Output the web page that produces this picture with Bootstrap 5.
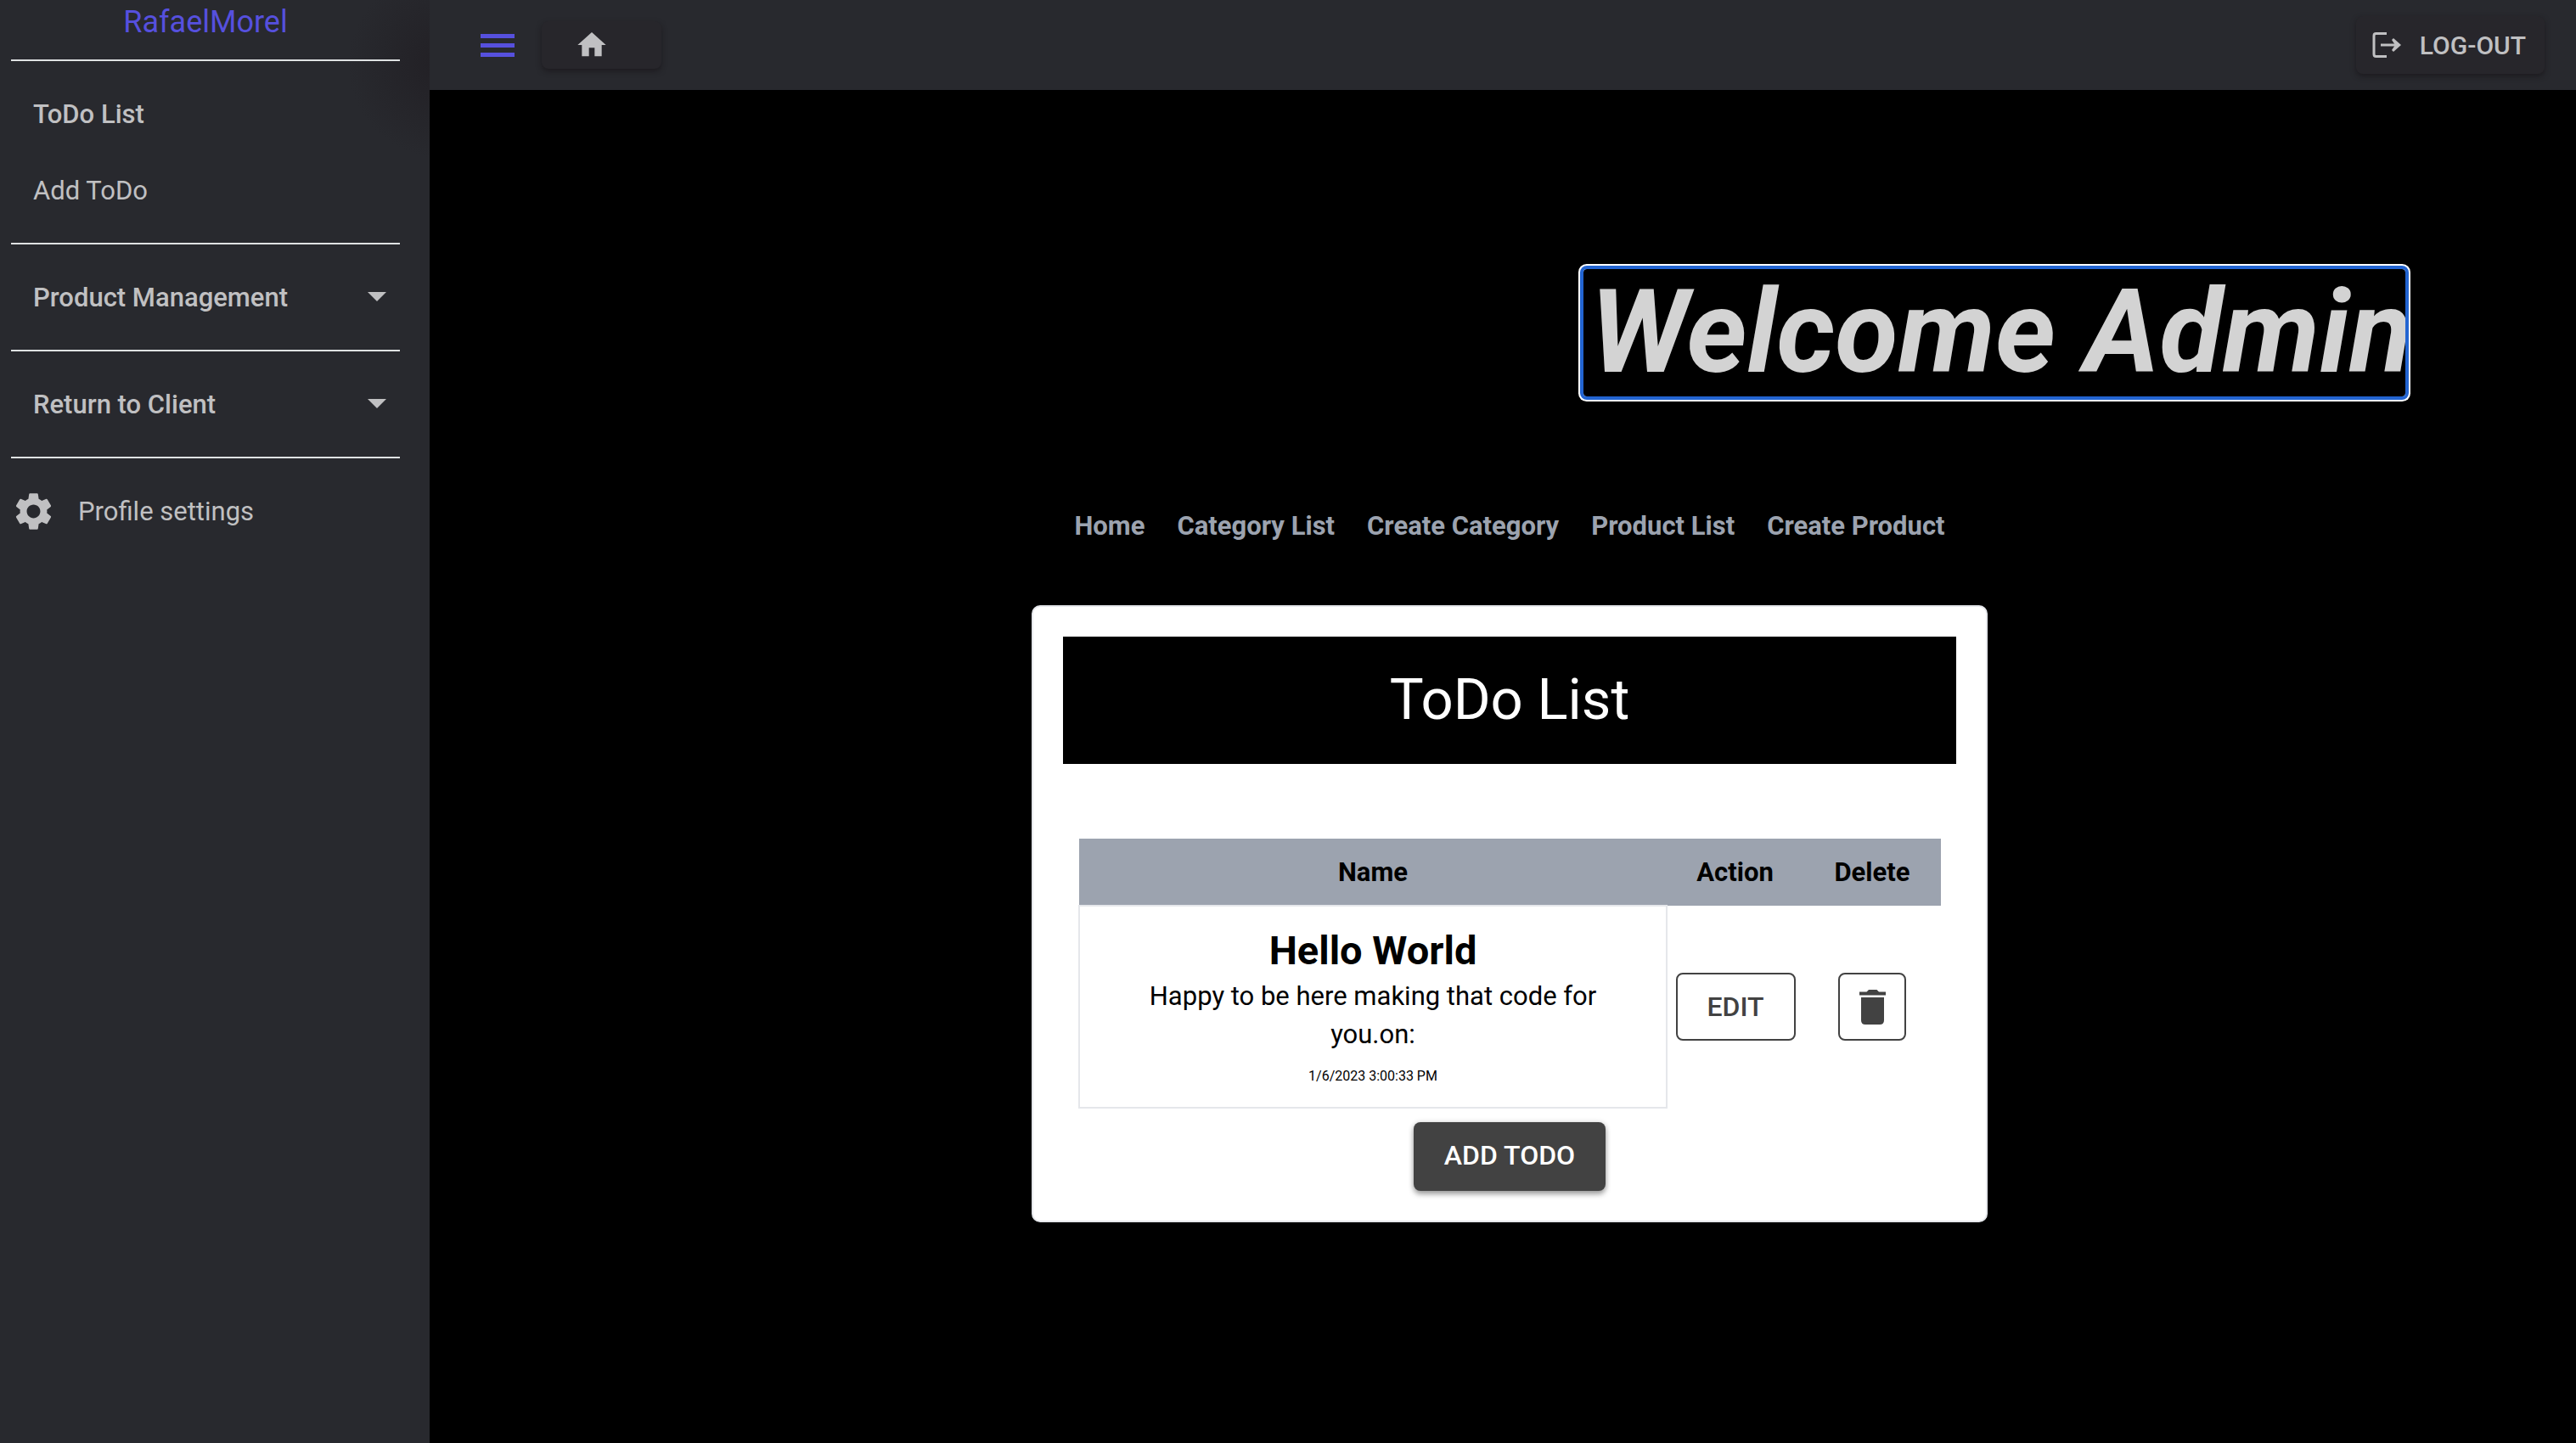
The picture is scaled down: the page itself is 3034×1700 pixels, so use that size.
<!DOCTYPE html>
<html lang="en">
<head>
<meta charset="utf-8">
<meta name="viewport" content="width=device-width, initial-scale=1">
<title>Admin - ToDo List</title>
<link href="https://cdn.jsdelivr.net/npm/bootstrap@5.3.0/dist/css/bootstrap.min.css" rel="stylesheet">
<style>
  body { background: #000; color: #000; font: 400 31px/45px Roboto, "Liberation Sans", sans-serif; }
  a { color: inherit; text-decoration: none; }
  svg { display: block; fill: currentColor; flex: none; }
  .side { flex: 0 0 506px; background: #28292e radial-gradient(circle at 520px 76px, #222025 0, #28292e 110px); color: #c0c0c2; padding: 0 35px 0 13px; }
  .side-brand { height: 70px; padding-top: 2px; font-size: 36px; line-height: 48px; color: #5650de; }
  .side-group { border-top: 2px solid #dfe2e3; padding: 17px 0; }
  .side-item { display: flex; align-items: center; width: 100%; height: 90px; padding: 0 11px 0 26px; background: none; border: 0; color: inherit; text-align: left; }
  .side-item.strong { font-weight: 500; }
  .side-item.with-icon { padding-left: 0; gap: 26px; }
  .top { height: 106px; background: #28292e; color: #c0c0c2; padding: 0 37px 0 59px; }
  .top-btn { background: #27262b; color: inherit; border: 0; border-radius: 8px; box-shadow: 0 3px 6px rgba(20, 16, 20, .55); }
  .home-btn { width: 141px; height: 56px; margin-left: 31px; padding: 0 0 0 39px; }
  .logout-btn { height: 68px; padding: 0 22px 0 19px; font-size: 30px; font-weight: 500; gap: 22px; }
  .logout-btn svg { fill: none; stroke: currentColor; stroke-width: 3; }
  .menu-btn { background: none; border: 0; padding: 0; color: #5650de; }
  .content { padding: 211px 0 0 16px; }
  .welcome { width: 968px; height: 150px; margin: 0 8% 0 auto; padding-left: 8px; font-size: 136px; line-height: 150px; font-weight: 700; font-style: italic; color: #d3d3d3; white-space: nowrap; outline: 4px solid #2264d1; box-shadow: 0 0 0 6px #fff; border-radius: 4px; }
  .links { margin-top: 130px; gap: 38px; font-weight: 700; color: #9ca3af; }
  .panel { width: 1126px; margin: 71px auto 0; padding: 35px; background: #fff; border: 2px solid #e5e7eb; border-radius: 10px; }
  .panel-title { height: 150px; line-height: 148px; font-size: 67px; font-weight: 400; background: #000; color: #fff; margin: 0 0 88px; }
  .todo-table { width: 1015px; margin: 0 auto; border-collapse: collapse; table-layout: fixed; text-align: center; }
  .todo-table th { height: 79px; background: #9ca3af; padding: 0; font-weight: 700; }
  .todo-table td { height: 238px; padding: 0; vertical-align: middle; }
  .todo-table td.entry { border: 2px solid #e5e7eb; padding: 21px 64px 8px; vertical-align: top; }
  .col-name { width: 692px; }
  .col-action { width: 161px; }
  .col-delete { width: 162px; }
  .entry-title { font-size: 47px; line-height: 62px; font-weight: 700; margin: 0; }
  .entry-date { font-size: 16px; line-height: 54px; }
  .line-btn { display: block; height: 80px; margin: 0 auto; border: 2px solid #424242; border-radius: 8px; color: #424242; background: none; font-size: 32px; font-weight: 500; padding: 0; }
  .edit-btn { width: 141px; }
  .trash-btn { width: 80px; }
  .add-btn { display: block; height: 81px; width: 226px; margin: 16px auto 0; padding: 0 0 2px; border: 0; border-radius: 8px; background: #424242; color: #fff; font-size: 32px; font-weight: 500; box-shadow: 0 4px 6px rgba(0, 0, 0, .35), 0 0 6px rgba(0, 0, 0, .15); }
</style>
<script src="https://cdn.jsdelivr.net/npm/bootstrap@5.3.0/dist/js/bootstrap.bundle.min.js"></script>
</head>
<body>
<div class="d-flex min-vh-100">
  <aside class="side">
    <div class="side-brand text-center">RafaelMorel</div>
    <nav>
      <div class="side-group">
        <a class="side-item strong" href="#">ToDo List</a>
        <a class="side-item" href="#">Add ToDo</a>
      </div>
      <div class="side-group">
        <button class="side-item strong justify-content-between" type="button">Product Management
          <svg width="32" height="12" viewBox="0 0 32 12"><path d="M5 0h22L16 11z"/></svg></button>
      </div>
      <div class="side-group">
        <button class="side-item strong justify-content-between" type="button">Return to Client
          <svg width="32" height="12" viewBox="0 0 32 12"><path d="M5 0h22L16 11z"/></svg></button>
      </div>
      <div class="side-group">
        <a class="side-item with-icon" href="#">
          <svg width="53" height="53" viewBox="0 0 24 24"><path d="M19.14 12.94c.04-.3.06-.61.06-.94 0-.32-.02-.64-.07-.94l2.03-1.58c.18-.14.23-.41.12-.61l-1.92-3.32c-.12-.22-.37-.29-.59-.22l-2.39.96c-.5-.38-1.03-.7-1.62-.94l-.36-2.54c-.04-.24-.24-.41-.48-.41h-3.84c-.24 0-.43.17-.47.41l-.36 2.54c-.59.24-1.13.57-1.62.94l-2.39-.96c-.22-.08-.47 0-.59.22L2.74 8.87c-.12.21-.08.47.12.61l2.03 1.58c-.05.3-.09.63-.09.94s.02.64.07.94l-2.03 1.58c-.18.14-.23.41-.12.61l1.92 3.32c.12.22.37.29.59.22l2.39-.96c.5.38 1.03.7 1.62.94l.36 2.54c.05.24.24.41.48.41h3.84c.24 0 .44-.17.47-.41l.36-2.54c.59-.24 1.13-.56 1.62-.94l2.39.96c.22.08.47 0 .59-.22l1.92-3.32c.12-.22.07-.47-.12-.61l-2.01-1.58zM12 15.6c-1.98 0-3.6-1.62-3.6-3.6s1.62-3.6 3.6-3.6 3.6 1.62 3.6 3.6-1.62 3.6-3.6 3.6z"/></svg>
          Profile settings</a>
      </div>
    </nav>
  </aside>
  <div class="flex-grow-1">
    <header class="top d-flex align-items-center">
      <button class="menu-btn" type="button" aria-label="Menu"><svg width="42" height="27" viewBox="0 0 42 27"><path d="M1 0h40v5H1zM1 11h40v5H1zM1 22h40v5H1z"/></svg></button>
      <button class="top-btn home-btn d-flex align-items-center" type="button" aria-label="Home"><svg width="40" height="40" viewBox="0 0 24 24"><path d="M10 20v-6h4v6h5v-8h3L12 3 2 12h3v8z"/></svg></button>
      <button class="top-btn logout-btn d-flex align-items-center ms-auto" type="button">
        <svg width="34" height="30" viewBox="0 0 34 30"><path d="M17 1.500H4.500Q2 1.500 2 4V26Q2 28.500 4.500 28.500H17M10 15H30"/><path d="M25 7l9 8-9 8-2-2 4-6-4-6z" fill="currentColor" stroke="none"/></svg>
        LOG-OUT</button>
    </header>
    <main class="content">
      <h1 class="welcome" tabindex="-1">Welcome Admin</h1>
      <nav class="links d-flex justify-content-center">
        <a href="#">Home</a><a href="#">Category List</a><a href="#">Create Category</a><a href="#">Product List</a><a href="#">Create Product</a>
      </nav>
      <section class="panel text-center">
        <h2 class="panel-title">ToDo List</h2>
        <table class="todo-table">
          <colgroup><col class="col-name"><col class="col-action"><col class="col-delete"></colgroup>
          <thead><tr><th scope="col">Name</th><th scope="col">Action</th><th scope="col">Delete</th></tr></thead>
          <tbody><tr>
            <td class="entry">
              <h3 class="entry-title">Hello World</h3>
              <div>Happy to be here making that code for you.on:</div>
              <div class="entry-date">1/6/2023 3:00:33 PM</div>
            </td>
            <td><button class="line-btn edit-btn" type="button">EDIT</button></td>
            <td><button class="line-btn trash-btn" type="button" aria-label="Delete"><svg class="mx-auto" width="31" height="41" viewBox="0 0 31 41"><path d="M0 2.500h8.500L11 0h9.500L23 2.500h8V6.500H0zM2 9h27v27q0 5-5 5H7q-5 0-5-5z"/></svg></button></td>
          </tr></tbody>
        </table>
        <button class="add-btn" type="button">ADD TODO</button>
      </section>
    </main>
  </div>
</div>
</body>
</html>
